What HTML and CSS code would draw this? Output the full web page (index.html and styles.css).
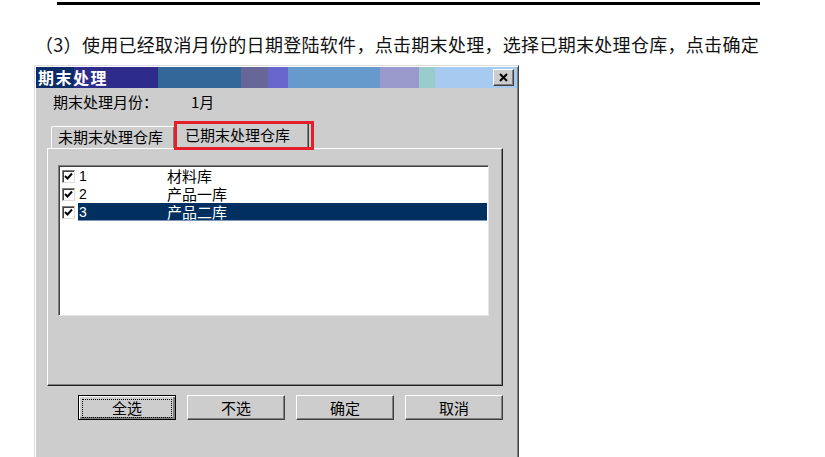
FILE: index.html
```html
<!DOCTYPE html>
<html lang="zh-CN">
<head>
    <meta charset="UTF-8">
    <meta name="viewport" content="width=device-width, initial-scale=1.0">
    <title>期末处理</title>
    <link rel="stylesheet" href="styles.css">
</head>
<body>

<div class="rule"></div>
<p class="caption">（3）使用已经取消月份的日期登陆软件，点击期末处理，选择已期末处理仓库，点击确定</p>

<div class="window">
    <div class="titlebar">
        <span class="title">期末处理</span>
        <span class="close">
            <svg width="10" height="9" viewBox="0 0 10 9"><path d="M1 1 L8 8 M8 1 L1 8" stroke="#000" stroke-width="2"/></svg>
        </span>
    </div>

    <div class="month">
        <span class="label">期末处理月份：</span>
        <span>1月</span>
    </div>

    <div class="tabs">
        <div class="tab">未期末处理仓库</div>
        <div class="tab active">已期末处理仓库<span class="mark"></span></div>
    </div>

    <div class="panel">
        <div class="list">
            <div class="row">
                <span class="check"><svg width="9" height="9" viewBox="0 0 9 9"><path d="M1 4 L3.5 6.5 L8 1.5" stroke="#000" stroke-width="2" fill="none"/></svg></span>
                <span class="cell"><span class="num">1</span><span class="name">材料库</span></span>
            </div>
            <div class="row">
                <span class="check"><svg width="9" height="9" viewBox="0 0 9 9"><path d="M1 4 L3.5 6.5 L8 1.5" stroke="#000" stroke-width="2" fill="none"/></svg></span>
                <span class="cell"><span class="num">2</span><span class="name">产品一库</span></span>
            </div>
            <div class="row">
                <span class="check"><svg width="9" height="9" viewBox="0 0 9 9"><path d="M1 4 L3.5 6.5 L8 1.5" stroke="#000" stroke-width="2" fill="none"/></svg></span>
                <span class="cell selected"><span class="num">3</span><span class="name">产品二库</span></span>
            </div>
        </div>
    </div>

    <div class="buttons">
        <button class="btn default"><span class="focus">全选</span></button>
        <button class="btn">不选</button>
        <button class="btn">确定</button>
        <button class="btn">取消</button>
    </div>
</div>

</body>
</html>
```

FILE: styles.css
```css
body {
    margin: 0;
    background-color: #fff;
    font-family: "Noto Sans CJK SC", "Liberation Sans", sans-serif;
    overflow: hidden;
    height: 457px;
}
.rule {
    margin: 2px 0 0 57px;
    width: 703px;
    height: 3px;
    background-color: #000;
}
.caption {
    margin: 27px 0 0 35px;
    font-size: 18px;
    line-height: 24px;
    color: #111;
    letter-spacing: 0.3px;
}
.window {
    box-sizing: border-box;
    margin: 9px 0 0 34px;
    width: 485px;
    height: 392px;
    padding: 1px;
    background-color: #cdcdcd;
    border: 1px solid;
    border-bottom: none;
    border-color: #dcdcdc #404040 #404040 #dcdcdc;
    box-shadow: inset 1px 1px #fff, inset -1px 0 #808080;
}
.titlebar {
    height: 21px;
    display: flex;
    align-items: center;
    justify-content: space-between;
    padding: 0 3px 0 2px;
    background: linear-gradient(to right,
        #0b2c66 0, #0b2c66 38px,
        #2e2c8a 38px, #2e2c8a 122px,
        #336699 122px, #336699 205px,
        #666699 205px, #666699 232px,
        #6666cc 232px, #6666cc 252px,
        #6699cc 252px, #6699cc 344px,
        #9999cc 344px, #9999cc 383px,
        #99cccc 383px, #99cccc 399px,
        #a6caf0 399px);
}
.title {
    color: #fff;
    font-weight: bold;
    font-size: 16px;
    letter-spacing: 1.5px;
    line-height: 21px;
}
.close {
    box-sizing: border-box;
    width: 21px;
    height: 17px;
    display: flex;
    align-items: center;
    justify-content: center;
    background-color: #cdcdcd;
    border: 1px solid;
    border-color: #fff #404040 #404040 #fff;
    box-shadow: inset -1px -1px #808080;
}
.month {
    margin-top: 6px;
    padding-left: 17px;
    font-size: 15px;
    line-height: 16px;
    color: #000;
    display: flex;
}
.month .label {
    width: 138px;
}
.tabs {
    margin: 12px 0 0 15px;
    height: 26px;
    display: flex;
    align-items: flex-end;
    position: relative;
    z-index: 1;
}
.tab {
    box-sizing: border-box;
    height: 22px;
    padding: 0 6px;
    font-size: 15px;
    line-height: 20px;
    color: #000;
    border: 1px solid;
    border-bottom: none;
    border-color: #fff #404040 transparent #fff;
    border-radius: 2px 2px 0 0;
    box-shadow: inset -1px 0 #808080;
    background-color: #cdcdcd;
    width: 124px;
}
.tab.active {
    position: relative;
    width: 135px;
    height: 27px;
    line-height: 24px;
    padding: 0 10px;
    margin-left: -1px;
    margin-bottom: -1px;
}
.mark {
    position: absolute;
    left: -1px;
    top: -2px;
    width: 134px;
    height: 23px;
    border: 3px solid #e3202a;
}
.panel {
    box-sizing: border-box;
    margin-left: 11px;
    width: 456px;
    height: 238px;
    padding: 16px 0 0 10px;
    border: 1px solid;
    border-color: #fff #202020 #202020 #fff;
    box-shadow: inset -1px -1px #808080;
}
.list {
    box-sizing: border-box;
    width: 431px;
    height: 151px;
    padding-top: 1px;
    background-color: #fff;
    border: 1px solid;
    border-color: #808080 #e6e6e6 #e6e6e6 #808080;
    box-shadow: inset 1px 1px #404040;
}
.row {
    height: 18px;
    display: flex;
    align-items: center;
    padding-left: 2px;
    font-size: 15px;
    line-height: 18px;
    color: #000;
}
.check {
    box-sizing: border-box;
    width: 13px;
    height: 13px;
    margin: 0 3px 0 1px;
    display: flex;
    align-items: center;
    justify-content: center;
    background-color: #fff;
    border: 1px solid;
    border-color: #808080 #dcdcdc #dcdcdc #808080;
    box-shadow: inset 1px 1px #404040;
}
.cell {
    flex: 1;
    height: 18px;
    display: flex;
    align-items: center;
    padding-left: 1px;
    margin-right: 1px;
}
.cell.selected {
    background-color: #00305f;
    color: #fff;
    box-shadow: inset 0 -1px #7d97b8;
}
.num {
    width: 88px;
    font-family: "Liberation Sans", sans-serif;
    font-size: 14px;
}
.buttons {
    margin: 9px 0 0 42px;
    display: flex;
    gap: 11px;
}
.btn {
    box-sizing: border-box;
    width: 98px;
    height: 25px;
    padding: 0;
    font-family: "Noto Sans CJK SC", sans-serif;
    font-size: 15px;
    line-height: 20px;
    color: #000;
    background-color: #cdcdcd;
    border: 1px solid;
    border-color: #fff #404040 #404040 #fff;
    box-shadow: inset -1px -1px #808080;
}
.btn.default {
    border: 1px solid #000;
    box-shadow: inset 1px 1px #fff, inset -2px -2px #808080;
    padding: 3px;
}
.focus {
    display: block;
    height: 17px;
    line-height: 16px;
    border: 1px dotted #000;
}
```
